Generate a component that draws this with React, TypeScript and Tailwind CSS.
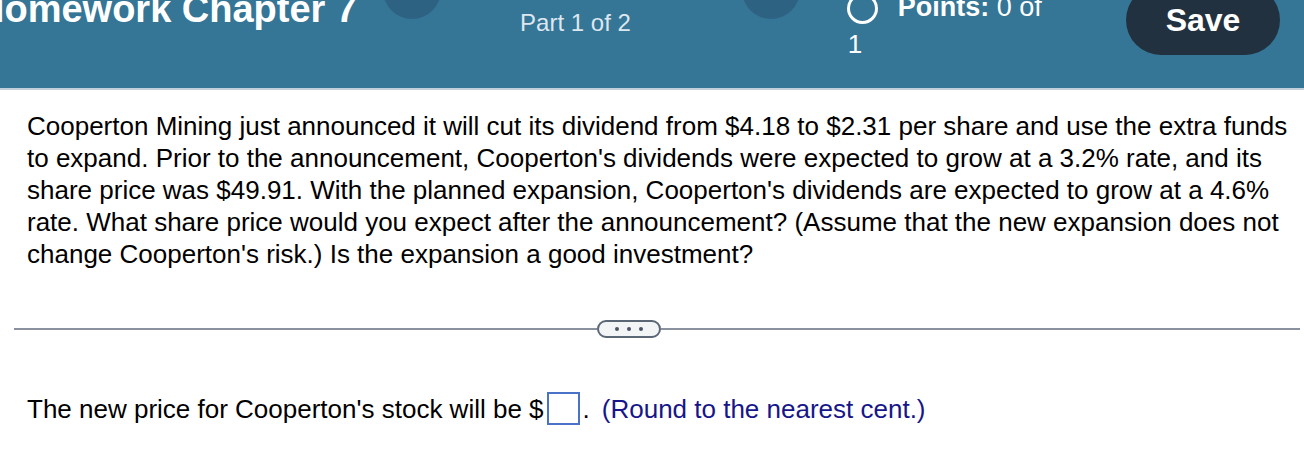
import React from "react";

const font = { fontFamily: '"Liberation Sans", Arial, Helvetica, sans-serif' };

const Header = () => (
  <header className="h-[90px] overflow-hidden border-b-2 border-[#c4cfdc] bg-[#357596] text-white">
    <div className="flex items-start">
      <h1 className="-ml-[23px] -mt-[10px] whitespace-nowrap text-[38px] font-bold leading-[38px]">
        Homework Chapter 7
      </h1>
      <div className="-mt-[39px] ml-[26px] h-[58px] w-[58px] shrink-0 rounded-full bg-[#2e6283]" />
      <div className="ml-[79px] mt-[11px] whitespace-nowrap text-[24px] leading-[24px] text-[#dde7ef]">
        Part 1 of 2
      </div>
      <div className="-mt-[39px] ml-[111px] h-[58px] w-[58px] shrink-0 rounded-full bg-[#2e6283]" />
      <div className="ml-[47px] -mt-[7px] flex flex-col">
        <div className="flex items-start">
          <span className="h-[31px] w-[31px] shrink-0 rounded-full border-[3px] border-white" />
          <span className="ml-[20px] mt-[1px] whitespace-nowrap text-[27px] leading-[27px]">
            <b>Points:</b> 0 of
          </span>
        </div>
        <span className="ml-[1px] mt-[7px] text-[26px] leading-[26px]">1</span>
      </div>
      <button className="ml-auto mr-[24px] -mt-[15px] flex h-[70px] w-[154px] shrink-0 items-center justify-center rounded-full bg-[#22313f] text-[32px] font-bold text-white">
        Save
      </button>
    </div>
  </header>
);

export default function App() {
  return (
    <div className="h-[450px] overflow-hidden bg-white text-black" style={font}>
      <Header />
      <p className="mt-[20px] pl-[27px] pr-[4px] text-[26px] leading-[32px]">
        Cooperton Mining just announced it will cut its dividend from $4.18 to $2.31 per share and use the extra funds
        to expand. Prior to the announcement, Cooperton's dividends were expected to grow at a 3.2% rate, and its share
        price was $49.91. With the planned expansion, Cooperton's dividends are expected to grow at a 4.6% rate. What
        share price would you expect after the announcement? (Assume that the new expansion does not change
        Cooperton's risk.) Is the expansion a good investment?
      </p>

      <div className="ml-[14px] mr-[4px] mt-[50px] flex items-center">
        <div className="h-[2px] w-[583px] bg-[#8a919e]" />
        <div className="flex h-[18px] w-[64px] items-center justify-center gap-[8px] rounded-full border-2 border-[#5b6677] bg-[#f3f4f6]">
          <span className="h-[4px] w-[4px] rounded-full bg-[#4b5563]" />
          <span className="h-[4px] w-[4px] rounded-full bg-[#4b5563]" />
          <span className="h-[4px] w-[4px] rounded-full bg-[#4b5563]" />
        </div>
        <div className="h-[2px] flex-1 bg-[#8a919e]" />
      </div>

      <div className="ml-[27px] mt-[54px] flex items-center text-[26px] leading-[32px]">
        <span className="whitespace-nowrap">The new price for Cooperton's stock will be $</span>
        <span className="ml-[3px] h-[33px] w-[33px] border-2 border-[#4a72c8] bg-white" />
        <span className="ml-[3px]">.</span>
        <span className="ml-[12px] whitespace-nowrap text-[#16168a]">(Round to the nearest cent.)</span>
      </div>
    </div>
  );
}
